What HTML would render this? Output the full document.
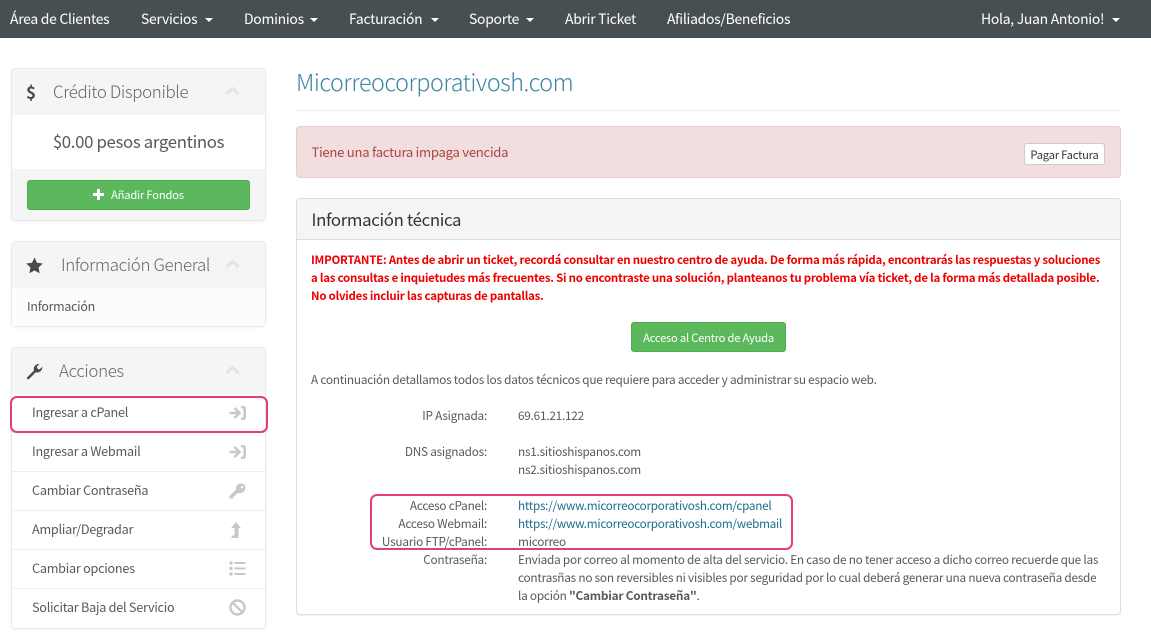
<!DOCTYPE html>
<html lang="es"><head><meta charset="utf-8"><title>Micorreocorporativosh.com</title>
<style>
html,body{margin:0;padding:0;background:#fff}
body{width:1151px;height:634px;position:relative;overflow:hidden;font-family:"Noto Sans CJK JP","Liberation Sans",sans-serif;color:#58595b;font-size:11.8px}
.t{position:absolute;white-space:nowrap;line-height:18px;height:18px;letter-spacing:-.02em}
.b{position:absolute;box-sizing:border-box}
.nav{color:#fff;font-size:13.95px;line-height:20px;height:20px;top:9px}
.car{position:absolute;top:18px;width:0;height:0;border-left:4.5px solid transparent;border-right:4.5px solid transparent;border-top:4.5px solid #fff}
.panel{background:#fff;border:1px solid #ddd;border-color:#eaeaea;border-radius:4px;left:11px;width:255px;box-shadow:0 1px 2px rgba(0,0,0,.05)}
.ph{background:#f5f5f5;left:12px;width:253px;height:46px}
.pt{font-size:16.9px;line-height:24px;height:24px;color:#666;font-weight:300}
.row{left:12px;width:253px;height:39px;border-bottom:1px solid #eee;background:#fff}
.ri{left:32px;color:#58595b;font-size:12.66px}
.lab{right:664px;text-align:right}
.val{left:518px}
a{color:#1a6e8e;text-decoration:none;font-size:11.7px}
svg{position:absolute;display:block}
</style></head><body>
<div class="b" style="left:0;top:0;width:1151px;height:38px;background:#474f53"></div>
<div class="t nav" style="left:10px">Área de Clientes</div>
<div class="t nav" style="left:141px">Servicios</div><div class="car" style="left:205px"></div>
<div class="t nav" style="left:244px">Dominios</div><div class="car" style="left:310px"></div>
<div class="t nav" style="left:349px">Facturación</div><div class="car" style="left:431px"></div>
<div class="t nav" style="left:469px">Soporte</div><div class="car" style="left:526px"></div>
<div class="t nav" style="left:565px">Abrir Ticket</div>
<div class="t nav" style="left:667px">Afiliados/Beneficios</div>
<div class="t nav" style="left:981px">Hola, Juan Antonio!</div><div class="car" style="left:1112px"></div>

<div class="b panel" style="top:68px;height:153px"></div>
<div class="b ph" style="top:69px;border-radius:3px 3px 0 0"></div>
<div class="t" style="left:26px;top:80px;height:24px;line-height:24px;font-size:17px;font-weight:700;color:#4a4a4a">$</div>
<div class="t pt" style="left:53px;top:79px">Crédito Disponible</div>
<svg style="left:225px;top:86px" width="15" height="10" viewBox="0 0 15 10"><path d="M1.5 8L7.5 2.5L13.5 8" fill="none" stroke="#e4e4e4" stroke-width="3"/></svg>
<div class="t" style="left:12px;width:253px;text-align:center;top:129px;height:24px;line-height:24px;font-size:16.8px;color:#58595b">$0.00 pesos argentinos</div>
<div class="b" style="left:12px;top:169px;width:253px;height:51px;background:#f5f5f5;border-radius:0 0 3px 3px"></div>
<div class="b" style="left:27px;top:180px;width:223px;height:30px;background:#5cb85c;border:1px solid #4cae4c;border-radius:3px"></div>
<svg style="left:93px;top:189px" width="11" height="11" viewBox="0 0 11 11"><path d="M5.5 0V11M0 5.5H11" stroke="#fff" stroke-width="3"/></svg>
<div class="t" style="left:111px;top:186px;font-size:11.25px;color:#fff">Añadir Fondos</div>

<div class="b panel" style="top:241px;height:86px"></div>
<div class="b ph" style="top:242px;border-radius:3px 3px 0 0"></div>
<svg style="left:26px;top:257px" width="17" height="17" viewBox="0 0 17 17"><path d="M8.5 0.5L11 5.7L16.7 6.5L12.6 10.5L13.6 16.2L8.5 13.5L3.4 16.2L4.4 10.5L0.3 6.5L6 5.7Z" fill="#4a4a4a"/></svg>
<div class="t pt" style="left:61px;top:252px">Información General</div>
<svg style="left:225px;top:259px" width="15" height="10" viewBox="0 0 15 10"><path d="M1.5 8L7.5 2.5L13.5 8" fill="none" stroke="#e4e4e4" stroke-width="3"/></svg>
<div class="b" style="left:12px;top:288px;width:253px;height:38px;background:#fcfcfc"></div>
<div class="t" style="left:27px;top:297px;color:#58595b;font-size:12.4px">Información</div>

<div class="b panel" style="top:347px;height:282px"></div>
<div class="b ph" style="top:348px;border-radius:3px 3px 0 0"></div>
<svg style="left:26px;top:363px" width="17" height="17" viewBox="0 0 17 17"><path d="M1 14.5L8 7.5C7 4 9.5 .8 13.5 1L10.8 3.8L11.5 5.8L13.5 6.5L16.3 3.8C16.5 7.5 13.3 10.3 9.8 9.3L3 16C2 17 .2 15.5 1 14.5Z" fill="#4a4a4a"/></svg>
<div class="t pt" style="left:59px;top:358px">Acciones</div>
<svg style="left:225px;top:365px" width="15" height="10" viewBox="0 0 15 10"><path d="M1.5 8L7.5 2.5L13.5 8" fill="none" stroke="#e4e4e4" stroke-width="3"/></svg>
<div class="b row" style="top:394px"></div>
<div class="b row" style="top:433px"></div>
<div class="b row" style="top:472px"></div>
<div class="b row" style="top:511px"></div>
<div class="b row" style="top:550px"></div>
<div class="b row" style="top:589px;border-bottom:0;border-radius:0 0 3px 3px"></div>
<div class="t ri" style="top:403px">Ingresar a cPanel</div>
<div class="t ri" style="top:442px">Ingresar a Webmail</div>
<div class="t ri" style="top:481px">Cambiar Contraseña</div>
<div class="t ri" style="top:520px">Ampliar/Degradar</div>
<div class="t ri" style="top:559px">Cambiar opciones</div>
<div class="t ri" style="top:598px">Solicitar Baja del Servicio</div>
<div class="b" style="left:10px;top:396px;width:258px;height:37px;border:2px solid #e43d78;border-radius:7px"></div>
<svg style="left:229px;top:405px" width="17" height="16" viewBox="0 0 17 16"><path d="M.5 8H9M5.500 3L10.500 8L5.500 13M12 2.200H13.800Q15.700 2.200 15.700 4V12Q15.700 13.800 13.800 13.800H12" fill="none" stroke="#c8c8c8" stroke-width="2.600"/></svg>
<svg style="left:229px;top:444px" width="17" height="16" viewBox="0 0 17 16"><path d="M.5 8H9M5.500 3L10.500 8L5.500 13M12 2.200H13.800Q15.700 2.200 15.700 4V12Q15.700 13.800 13.800 13.800H12" fill="none" stroke="#c8c8c8" stroke-width="2.600"/></svg>
<svg style="left:229px;top:483px" width="17" height="16" viewBox="0 0 17 16"><path d="M.5 13V15.500H4.500V13H6.500V11H8L9 10C12 11 16.500 9 16.500 4.500C16.500 2 14.500 .5 12 .5C8.500 .5 6.500 3.500 7 6.500Z" fill="#c8c8c8"/><circle cx="13" cy="4" r="1.300" fill="#fff"/></svg>
<svg style="left:230px;top:521px" width="14" height="18" viewBox="0 0 14 18"><path d="M6 1L11 7H8.500V17H.8L3 14.300H4.500V7H1Z" fill="#c8c8c8"/></svg>
<svg style="left:229px;top:561px" width="17" height="15" viewBox="0 0 17 15"><g fill="#c8c8c8"><circle cx="2" cy="2" r="1.700"/><circle cx="2" cy="7.500" r="1.700"/><circle cx="2" cy="13" r="1.700"/><rect x="5.500" y="1" width="11" height="2"/><rect x="5.500" y="6.500" width="11" height="2"/><rect x="5.500" y="12" width="11" height="2"/></g></svg>
<svg style="left:229px;top:599px" width="17" height="17" viewBox="0 0 17 17"><circle cx="8.500" cy="8.500" r="7" fill="none" stroke="#c8c8c8" stroke-width="2.400"/><path d="M3.500 3.500L13.500 13.500" stroke="#c8c8c8" stroke-width="2.400"/></svg>

<div class="t" style="left:296px;top:66px;height:30px;line-height:30px;font-size:23.3px;font-weight:300;color:#3f86a2">Micorreocorporativosh.com</div>
<div class="b" style="left:296px;top:110px;width:825px;height:1px;background:#eee"></div>
<div class="b" style="left:296px;top:126px;width:825px;height:52px;background:#f2dede;border:1px solid #ebccd1;border-radius:4px"></div>
<div class="t" style="left:311.5px;top:143px;color:#a94442;font-size:13.1px">Tiene una factura impaga vencida</div>
<div class="b" style="left:1024px;top:143px;width:81px;height:22px;background:#fff;border:1px solid #ccc;border-radius:3px"></div>
<div class="t" style="left:1024px;width:81px;text-align:center;top:146px;font-size:11.2px;color:#333">Pagar Factura</div>

<div class="b" style="left:296px;top:198px;width:825px;height:417px;background:#fff;border:1px solid #ddd;border-radius:4px;box-shadow:0 1px 1px rgba(0,0,0,.05)"></div>
<div class="b" style="left:297px;top:199px;width:823px;height:41px;background:#f5f5f5;border-bottom:1px solid #ddd;border-radius:3px 3px 0 0"></div>
<div class="t" style="left:311.5px;top:207px;height:24px;line-height:24px;font-size:16.8px;color:#333">Información técnica</div>
<div class="t" style="left:311px;top:251px;color:#ee0000;font-weight:700;font-size:11.44px">IMPORTANTE: Antes de abrir un ticket, recordá consultar en nuestro centro de ayuda. De forma más rápida, encontrarás las respuestas y soluciones</div>
<div class="t" style="left:311px;top:269px;color:#ee0000;font-weight:700;font-size:11.44px">a las consultas e inquietudes más frecuentes. Si no encontraste una solución, planteanos tu problema vía ticket, de la forma más detallada posible.</div>
<div class="t" style="left:311px;top:287px;color:#ee0000;font-weight:700;font-size:11.44px">No olvides incluir las capturas de pantallas.</div>
<div class="b" style="left:631px;top:322px;width:155px;height:30px;background:#5cb85c;border:1px solid #4cae4c;border-radius:3px"></div>
<div class="t" style="left:631px;width:155px;text-align:center;top:329px;font-size:11.2px;color:#fff">Acceso al Centro de Ayuda</div>
<div class="t" style="left:311px;top:371px">A continuación detallamos todos los datos técnicos que requiere para acceder y administrar su espacio web.</div>
<div class="t lab" style="top:407px">IP Asignada:</div><div class="t val" style="top:407px">69.61.21.122</div>
<div class="t lab" style="top:443px">DNS asignados:</div><div class="t val" style="top:443px">ns1.sitioshispanos.com</div>
<div class="t val" style="top:461px">ns2.sitioshispanos.com</div>
<div class="t lab" style="top:497px">Acceso cPanel:</div><div class="t val" style="top:497px"><a href="#">https://www.micorreocorporativosh.com/cpanel</a></div>
<div class="t lab" style="top:515px">Acceso Webmail:</div><div class="t val" style="top:515px"><a href="#">https://www.micorreocorporativosh.com/webmail</a></div>
<div class="t lab" style="top:533px">Usuario FTP/cPanel:</div><div class="t val" style="top:533px">micorreo</div>
<div class="t lab" style="top:551px">Contraseña:</div>
<div class="t val" style="top:551px">Enviada por correo al momento de alta del servicio. En caso de no tener acceso a dicho correo recuerde que las</div>
<div class="t val" style="top:569px">contrasñas no son reversibles ni visibles por seguridad por lo cual deberá generar una nueva contraseña desde</div>
<div class="t val" style="top:587px">la opción <b>"Cambiar Contraseña"</b>.</div>
<div class="b" style="left:370px;top:494px;width:423px;height:56px;border:2px solid #e43d78;border-radius:7px"></div>
</body></html>
